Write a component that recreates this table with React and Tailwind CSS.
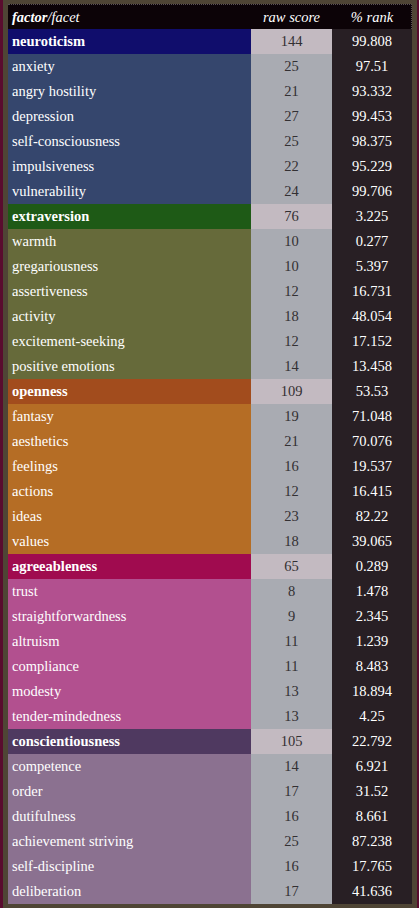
import React from "react"

const factors = [
  {
    name: "neuroticism",
    raw: 144,
    rank: "99.808",
    head: "bg-[#100d6c]",
    body: "bg-[#35466d]",
    facets: [
      ["anxiety", 25, "97.51"],
      ["angry hostility", 21, "93.332"],
      ["depression", 27, "99.453"],
      ["self-consciousness", 25, "98.375"],
      ["impulsiveness", 22, "95.229"],
      ["vulnerability", 24, "99.706"],
    ],
  },
  {
    name: "extraversion",
    raw: 76,
    rank: "3.225",
    head: "bg-[#1e5a16]",
    body: "bg-[#666a3a]",
    facets: [
      ["warmth", 10, "0.277"],
      ["gregariousness", 10, "5.397"],
      ["assertiveness", 12, "16.731"],
      ["activity", 18, "48.054"],
      ["excitement-seeking", 12, "17.152"],
      ["positive emotions", 14, "13.458"],
    ],
  },
  {
    name: "openness",
    raw: 109,
    rank: "53.53",
    head: "bg-[#a24c1d]",
    body: "bg-[#b56d25]",
    facets: [
      ["fantasy", 19, "71.048"],
      ["aesthetics", 21, "70.076"],
      ["feelings", 16, "19.537"],
      ["actions", 12, "16.415"],
      ["ideas", 23, "82.22"],
      ["values", 18, "39.065"],
    ],
  },
  {
    name: "agreeableness",
    raw: 65,
    rank: "0.289",
    head: "bg-[#a00b4f]",
    body: "bg-[#b2508f]",
    facets: [
      ["trust", 8, "1.478"],
      ["straightforwardness", 9, "2.345"],
      ["altruism", 11, "1.239"],
      ["compliance", 11, "8.483"],
      ["modesty", 13, "18.894"],
      ["tender-mindedness", 13, "4.25"],
    ],
  },
  {
    name: "conscientiousness",
    raw: 105,
    rank: "22.792",
    head: "bg-[#4f3960]",
    body: "bg-[#8b7190]",
    facets: [
      ["competence", 14, "6.921"],
      ["order", 17, "31.52"],
      ["dutifulness", 16, "8.661"],
      ["achievement striving", 25, "87.238"],
      ["self-discipline", 16, "17.765"],
      ["deliberation", 17, "41.636"],
    ],
  },
]

const Row = ({ label, raw, rank, labelBg, rawBg, bold }) => (
  <div className="grid grid-cols-[243px_81px_80px] h-[25px] leading-[25px]">
    <div className={`${labelBg} pl-[4px] text-white ${bold ? "font-bold" : ""}`}>{label}</div>
    <div className={`${rawBg} text-center text-[#333033]`}>{raw}</div>
    <div className="bg-[#281f24] text-center text-white">{rank}</div>
  </div>
)

export default function App() {
  return (
    <div className="min-h-screen bg-[#590c2e]" style={{ fontFamily: '"Liberation Serif", "Times New Roman", serif' }}>
      <div className="ml-[3px] w-[414px] bg-[#4f4535] px-[5px] pt-[4px] pb-[5px] text-[14.5px]">
        <div className="grid grid-cols-[243px_81px_80px] h-[25px] leading-[25px] bg-[#0c0307] text-white italic border-t border-r border-dotted border-[#5a5056]">
          <div className="pl-[4px]">
            <span className="font-bold">factor</span>/facet
          </div>
          <div className="text-center">raw score</div>
          <div className="text-center">% rank</div>
        </div>
        {factors.map((f) => (
          <div key={f.name}>
            <Row label={f.name} raw={f.raw} rank={f.rank} labelBg={f.head} rawBg="bg-[#c3bac1]" bold />
            {f.facets.map(([name, raw, rank]) => (
              <Row key={name} label={name} raw={raw} rank={rank} labelBg={f.body} rawBg="bg-[#a9abb2]" />
            ))}
          </div>
        ))}
      </div>
    </div>
  )
}
